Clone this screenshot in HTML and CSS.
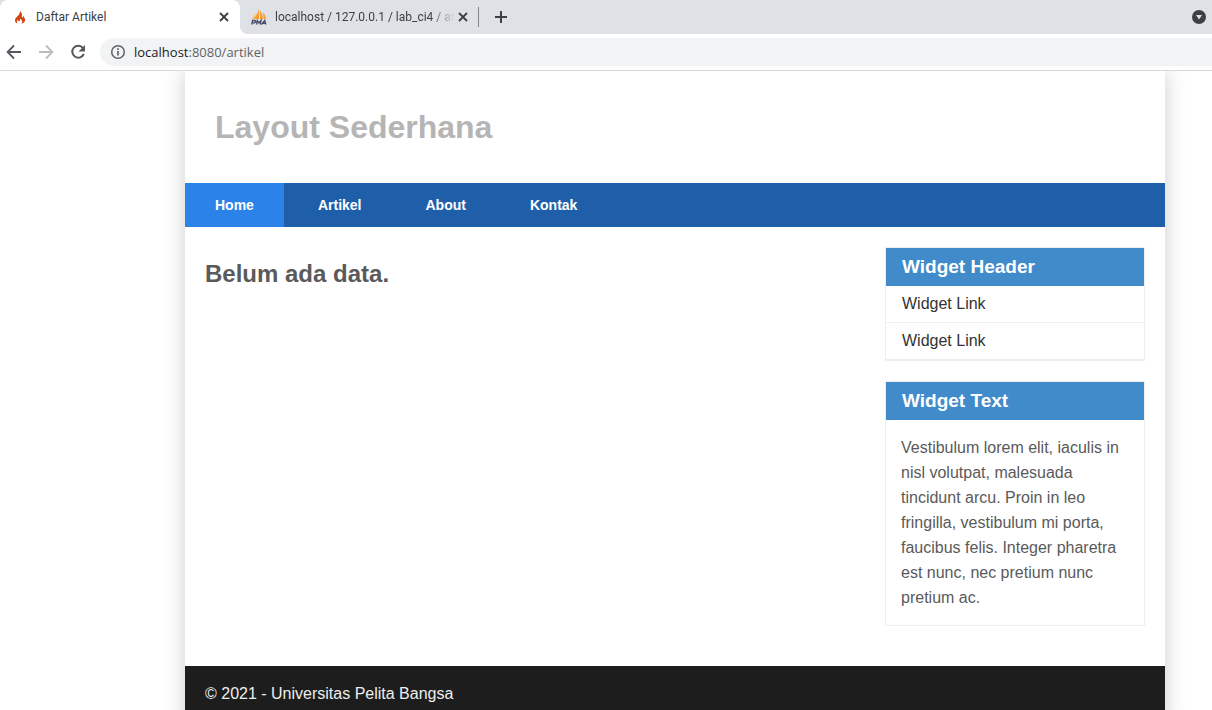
FILE: index.html
```html
<!DOCTYPE html>
<html lang="id">
<head>
<meta charset="utf-8">
<title>Daftar Artikel</title>
<link rel="stylesheet" href="styles.css">
</head>
<body>
<div class="browser">
  <div class="tabstrip">
    <div class="tab tab-active">
      <svg class="favicon" viewBox="0 0 16 16" width="16" height="16"><path fill="#d2440f" d="M7.800 2c.5 1.800-.3 3-1.500 4.400C5 7.800 3 9 3 11.200c0 1.700 1.100 2.900 2.900 3.300-1.500-1.200-1.400-2.900 0-3.900-.1 1 .4 1.600 1.100 1.600 1.300 0 1.200-1.500.8-2.500 2 .8 3.500 3.200 1.500 4.800 2.300-.4 3.800-1.700 3.800-3.600 0-1.800-1.300-2.400-1.600-4.300-.5.500-.6 1.200-.4 1.900-.6.300-1.200-.1-1.200-.8C9.900 6.400 10.500 4 7.800 2z"/></svg>
      <span class="tab-title">Daftar Artikel</span>
      <button class="icon-button tab-close" aria-label="Close tab"><svg viewBox="0 0 16 16" width="16" height="16"><path d="M4 4l8 8M12 4l-8 8" stroke="#3c4043" stroke-width="1.800"/></svg></button>
    </div>
    <div class="tab tab-second">
      <svg class="favicon" viewBox="0 0 16 16" width="16" height="16"><path fill="#f89c2e" d="M8 0v10H2.500C4.500 8 7 4 8 0zM9 1.500c1.800 2 2.700 5 3 8.500H9zM12 3c1.500 2 2.500 4 3 7h-2.300z"/><path fill="#fbbf70" d="M4.500 3.500v4L2.800 10H.5C2.500 8 3.700 6 4.500 3.500z"/><path d="M.8 15.500l.8-4h2.200c1.300 0 1 2.300-.5 2.300H1.400M5.500 15.500l.8-4 1.500 2.500 2.200-2.500-.8 4M10.500 15.500l3.200-4 1.100 4M11.800 14.300h2.500" fill="none" stroke="#49496c" stroke-width="1.300"/></svg>
      <span class="tab-title tab-title-fade">localhost / 127.0.0.1 / lab_ci4 / ar</span>
      <button class="icon-button tab-close" aria-label="Close tab"><svg viewBox="0 0 16 16" width="16" height="16"><path d="M4 4l8 8M12 4l-8 8" stroke="#3c4043" stroke-width="1.800"/></svg></button>
    </div>
    <button class="icon-button new-tab" aria-label="New tab"><svg viewBox="0 0 16 16" width="16" height="16"><path d="M8 2v12M2 8h12" stroke="#3c4043" stroke-width="2"/></svg></button>
    <button class="icon-button tab-search" aria-label="Search tabs"><svg viewBox="0 0 16 16" width="16" height="16"><circle cx="8" cy="8" r="7" fill="#3c4043"/><path d="M5 6h6l-3 4.500z" fill="#dee1e6"/></svg></button>
  </div>
  <div class="toolbar">
    <button class="icon-button" aria-label="Back"><svg viewBox="0 0 16 16" width="16" height="16"><path d="M15 8H2M8 1.500L1.600 8 8 14.500" fill="none" stroke="#55585d" stroke-width="1.800"/></svg></button>
    <button class="icon-button" aria-label="Forward"><svg viewBox="0 0 16 16" width="16" height="16"><path d="M1 8h13M8 1.500L14.400 8 8 14.500" fill="none" stroke="#babcbe" stroke-width="1.800"/></svg></button>
    <button class="icon-button" aria-label="Reload"><svg viewBox="0 0 16 16" width="16" height="16"><path d="M13 4A6 6 0 1 0 13.800 10" fill="none" stroke="#55585d" stroke-width="2"/><path d="M15 1v6.500H8.500z" fill="#55585d"/></svg></button>
    <div class="omnibox">
      <svg viewBox="0 0 16 16" width="16" height="16"><circle cx="8" cy="8" r="6.300" fill="none" stroke="#5f6368" stroke-width="1.500"/><path d="M8 7v4.500M8 4.300v1.700" stroke="#5f6368" stroke-width="1.700"/></svg>
      <a class="address" href="#">localhost<span class="address-path">:8080/artikel</span></a>
    </div>
  </div>
</div>
<div class="viewport">
  <div class="container">
    <header class="site-header"><h1>Layout Sederhana</h1></header>
    <nav class="site-nav">
      <a class="active" href="#">Home</a>
      <a href="#">Artikel</a>
      <a href="#">About</a>
      <a href="#">Kontak</a>
    </nav>
    <div class="content">
      <main class="main"><h2>Belum ada data.</h2></main>
      <aside class="sidebar">
        <section class="widget">
          <h3>Widget Header</h3>
          <ul>
            <li><a href="#">Widget Link</a></li>
            <li><a href="#">Widget Link</a></li>
          </ul>
        </section>
        <section class="widget">
          <h3>Widget Text</h3>
          <p>Vestibulum lorem elit, iaculis in nisl volutpat, malesuada tincidunt arcu. Proin in leo fringilla, vestibulum mi porta, faucibus felis. Integer pharetra est nunc, nec pretium nunc pretium ac.</p>
        </section>
      </aside>
    </div>
    <footer class="site-footer"><p>© 2021 - Universitas Pelita Bangsa</p></footer>
  </div>
</div>
</body>
</html>
```
FILE: styles.css
```css
* { box-sizing: border-box; margin: 0; padding: 0; }
body {
  display: flex;
  flex-direction: column;
  height: 100vh;
  overflow: hidden;
  background: #fff;
  color: #5a5a5a;
  font: 16px/25px "Liberation Sans", Arial, sans-serif;
}
a { color: inherit; text-decoration: none; }
svg { display: block; flex: none; }

.browser {
  flex: none;
  border-bottom: 1px solid #d8d8da;
  font-family: "Open Sans", "Noto Sans", sans-serif;
}
.icon-button {
  flex: none;
  border: 0;
  background: none;
  color: inherit;
}
.tabstrip {
  display: flex;
  align-items: center;
  height: 34px;
  background: #dee1e6;
}
.tab {
  display: flex;
  align-items: center;
  height: 34px;
  color: #3c4043;
  font-family: Roboto, sans-serif;
  font-size: 12px;
  line-height: 16px;
}
.tab-active {
  width: 240px;
  padding: 0 8px 0 12px;
  border-radius: 8px 8px 0 0;
  background: #fff;
}
.tab-second {
  width: 239px;
  padding: 0 8px 0 11px;
  background:
    linear-gradient(#80868b, #80868b) right center / 1px 20px no-repeat,
    radial-gradient(circle at 8px 0, transparent 8px, #fff 8px) left bottom / 8px 8px no-repeat;
}
.tab-title {
  flex: 1;
  min-width: 0;
  margin: 0 8px;
  white-space: nowrap;
}
.tab-title-fade {
  margin-right: 0;
  -webkit-mask-image: linear-gradient(to right, #000 86%, transparent);
  mask-image: linear-gradient(to right, #000 86%, transparent);
}
.new-tab { margin-left: 14px; }
.tab-search { margin-left: auto; margin-right: 5px; }
.toolbar {
  display: flex;
  align-items: center;
  gap: 16px;
  height: 36px;
  padding-left: 6px;
  background: #fff;
}
.omnibox {
  display: flex;
  flex: 1;
  align-items: center;
  gap: 8px;
  height: 28px;
  margin-left: -2px;
  padding-left: 10px;
  border-radius: 14px 0 0 14px;
  background: #f1f3f4;
  font-size: 13px;
}
.address { color: #202124; }
.address-path { color: #5f6368; }

.viewport {
  flex: 1;
  min-height: 0;
  overflow: hidden;
  padding: 0 47px 0 185px;
}
.container {
  max-width: 980px;
  background: #fff;
  box-shadow: 0 0 20px #ccc;
}
.site-header { padding: 36px 30px; }
.site-header h1 {
  color: #b5b5b5;
  font-size: 32px;
  line-height: 40px;
}
.site-nav {
  display: flex;
  gap: 4px;
  background: #1f5faa;
}
.site-nav a {
  padding: 0 30px;
  color: #fff;
  font-size: 14px;
  font-weight: bold;
  line-height: 44px;
}
.site-nav .active { background: #2b83ea; }
.content {
  display: flex;
  gap: 20px;
  padding: 20px 20px 40px;
}
.main { flex: 1; padding-top: 12px; }
.main h2 { font-size: 24px; line-height: 30px; }
.sidebar {
  display: grid;
  flex: none;
  gap: 20px;
  width: 260px;
}
.widget { border: 1px solid #eee; }
.widget h3 {
  padding: 6px 16px;
  background: #428bca;
  color: #fff;
  font-size: 19px;
  line-height: 26px;
}
.widget ul { list-style: none; }
.widget li {
  padding: 5px 16px 6px;
  border-bottom: 1px solid #eee;
  color: #333;
}
.widget p { padding: 15px; }
.site-footer {
  padding: 15px 20px 20px;
  background: #1d1d1d;
  color: #eee;
}
```
